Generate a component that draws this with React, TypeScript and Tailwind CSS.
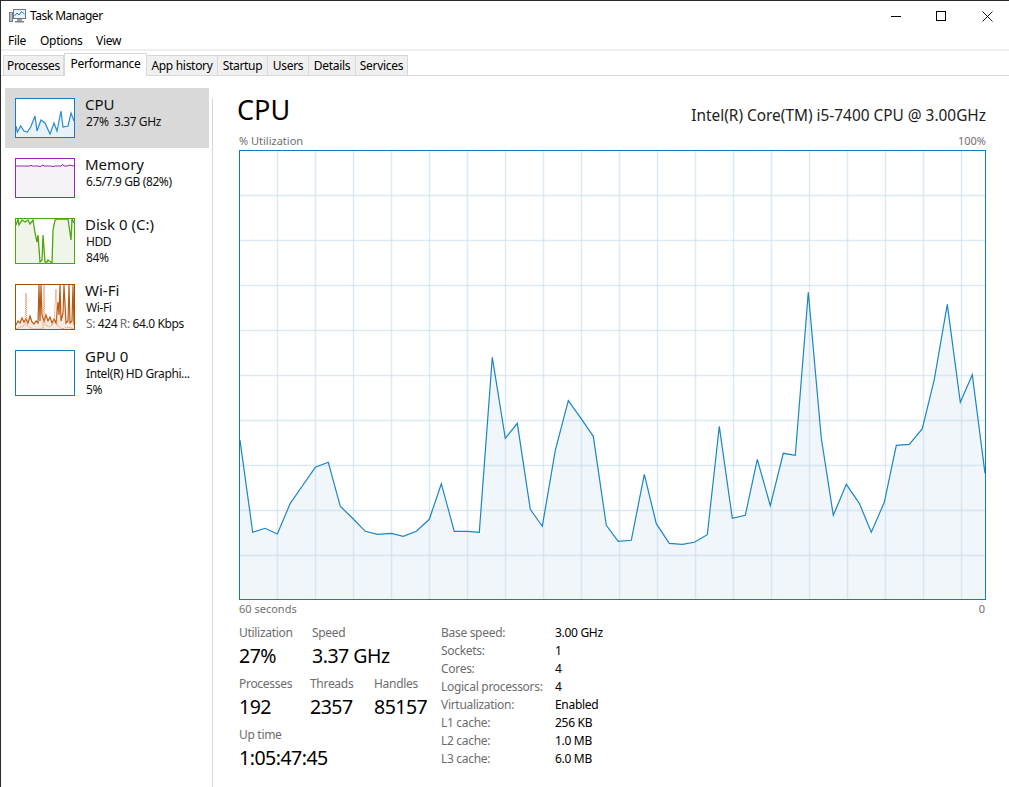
const TABS = [
  { name: 'Processes', width: 'w-[61px]' },
  { name: 'Performance', width: 'w-[83px]', active: true },
  { name: 'App history', width: 'w-[71px]' },
  { name: 'Startup', width: 'w-[50px]' },
  { name: 'Users', width: 'w-[41px]' },
  { name: 'Details', width: 'w-[47px]' },
  { name: 'Services', width: 'w-[52px]' },
]

const CPU_POINTS: [number, number][] = [
  [240, 440], [252.7, 532.3], [265, 528.3], [277.3, 534], [290.3, 503.3], [303, 485], [315.3, 467.3], [328.3, 462.3],
  [340.3, 506.3], [353.3, 519], [365.3, 531.3], [377.7, 534.3], [391.3, 533.3], [403.3, 536.3], [416.3, 531.3],
  [429.3, 519.3], [441.3, 483.7], [454.3, 531.3], [467.3, 531.3], [479.3, 532.3], [492.3, 357.3], [505.3, 438.3],
  [517.3, 423.3], [530.3, 509.3], [542.3, 526.3], [555.3, 450.3], [568.3, 400.7], [580.3, 417.3], [593.3, 436.3],
  [606.3, 525.3], [618.3, 541.3], [631.3, 540.3], [644.3, 474.3], [656.3, 523.7], [669.3, 543.3], [682.3, 544.3],
  [694.3, 542.3], [707.3, 534.7], [719.3, 426.3], [732.3, 518.3], [745.3, 515.3], [757.3, 459.3], [770.3, 505.7],
  [783.3, 453.3], [795.3, 455.3], [808.3, 292.3], [821.3, 438.3], [833.3, 515.3], [846.3, 484.3], [859.3, 503.3],
  [871.3, 532.3], [884.3, 502.3], [896.3, 445.3], [909.3, 444.3], [922.3, 428.7], [934.3, 379.3], [947.3, 304.3],
  [960.3, 402.3], [972.3, 374.7], [985, 473.3],
]

const VERTICALS = [277, 315, 353, 391, 429, 467, 505, 543, 581, 619, 657, 695, 733, 771, 809, 847, 885, 923, 961]
const HORIZONTALS = [195, 240, 285, 330, 375, 420, 465, 510, 555]

const STATS_RIGHT = [
  ['Base speed:', '3.00 GHz'],
  ['Sockets:', '1'],
  ['Cores:', '4'],
  ['Logical processors:', '4'],
  ['Virtualization:', 'Enabled'],
  ['L1 cache:', '256 KB'],
  ['L2 cache:', '1.0 MB'],
  ['L3 cache:', '6.0 MB'],
]

const toLine = (pts: [number, number][]) => pts.map((p) => p.join(',')).join(' ')

const AppIcon = () => (
  <svg width="17" height="16" viewBox="0 0 17 16" className="block">
    <rect x="0.5" y="4.5" width="3" height="9" fill="#b9bdc1" stroke="#7d8287" />
    <rect x="4.5" y="1.5" width="12" height="9" fill="#eaf3fa" stroke="#6e757c" />
    <path d="M5.5 8 L8 5 L10 7 L12.5 3.5 L15.5 6" fill="none" stroke="#2b7fbf" />
    <rect x="8" y="11" width="5" height="2" fill="#9aa0a6" />
    <rect x="6" y="13" width="9" height="1.5" fill="#7d8287" />
  </svg>
)

const WindowButtons = () => (
  <div className="ml-auto mr-[16px] flex items-center">
    <svg width="10" height="10" viewBox="0 0 10 10" className="block mr-[35px]">
      <line x1="0" x2="10" y1="5.5" y2="5.5" stroke="#000" />
    </svg>
    <svg width="10" height="10" viewBox="0 0 10 10" className="block mr-[36px]">
      <rect x="0.5" y="0.5" width="9" height="9" fill="none" stroke="#000" />
    </svg>
    <svg width="11" height="11" viewBox="0 0 11 11" className="block">
      <path d="M0.5 0.5 L10.5 10.5 M10.5 0.5 L0.5 10.5" stroke="#000" fill="none" strokeWidth="0.9" />
    </svg>
  </div>
)

const Thumb = ({ height, border, fill, children }: { height: string; border: string; fill?: string; children?: React.ReactNode }) => (
  <div className={`w-[60px] shrink-0 border ${height} ${border} ${fill ?? 'bg-white'}`}>
    {children}
  </div>
)

const CpuThumb = () => {
  const line: [number, number][] = [[0, 27], [1.3, 33], [4.7, 27], [8, 32], [11.3, 33], [14.7, 28], [19, 17], [21, 32], [25, 21], [29, 24], [34, 35], [38, 24], [41, 32], [45, 12], [47, 28], [52, 27], [55, 14], [58, 22]]
  return (
    <svg width="58" height="38" viewBox="0 0 58 38" className="block">
      <polygon points={`0,38 ${toLine(line)} 58,38`} fill="#e8f2f9" />
      <polyline points={toLine(line)} fill="none" stroke="#2a8cc7" strokeWidth="1.2" />
    </svg>
  )
}

const MemoryThumb = () => (
  <svg width="58" height="38" viewBox="0 0 58 38" className="block">
    <rect x="0" y="7" width="58" height="31" fill="#f4f2f4" />
    <polyline points="0,7 14,7 15,6 16,7 23,7 24,8 25,7 27,6 28,7 36,7 37,8 38,7 45,7 46,6 47,5.5 48,7 52,7 53,6 58,7" fill="none" stroke="#9528b4" />
  </svg>
)

const DiskThumb = () => {
  const line: [number, number][] = [[0, 6], [2, 0], [3, 6], [6, 1], [9, 3], [12, 1], [14, 5], [17, 1], [19, 14], [21, 23], [22, 16], [24, 43], [26, 41], [27, 16], [29, 43], [31, 43], [32, 41], [36, 44], [37, 11], [39, 1], [42, 0], [52, 0], [55, 21], [56, 0], [58, 4]]
  return (
    <svg width="58" height="44" viewBox="0 0 58 44" className="block">
      <polygon points={`0,44 ${toLine(line)} 58,44`} fill="#eff6e9" />
      <polyline points={toLine(line)} fill="none" stroke="#4da60c" strokeWidth="1.3" />
    </svg>
  )
}

const WifiThumb = () => {
  const solid = '0,40 2,36 4,38 6,33 8,37 10,34 12,38 14,31 16,37 18,39 20,36 22,38 23,0 24,36 25,0 26,30 28,36 30,30 32,36 34,32 36,38 38,34 40,38 42,17 43,30 44,0 45,36 47,28 48,0 50,38 52,36 53,0 54,38 56,36 57,0 58,40'
  const dotted = '0,44 5,42 9,40 10,8 11,40 16,44 27,44 28,0 29,40 34,42 38,38 40,4 41,40 46,44 52,42 58,44'
  return (
    <svg width="58" height="44" viewBox="0 0 58 44" className="block">
      <polygon points={`0,44 ${solid} 58,44`} fill="#f7ece3" />
      <polyline points={solid} fill="none" stroke="#b85c14" strokeWidth="1.2" />
      <polyline points={dotted} fill="none" stroke="#e0805a" strokeWidth="1" strokeDasharray="1 1" />
    </svg>
  )
}

const SideTitle = ({ children }: { children: React.ReactNode }) => (
  <div className="h-[16px] -mt-[2px] mb-[2px] text-[15px] leading-[16px] text-[#111] whitespace-nowrap">{children}</div>
)

const SideLine = ({ children }: { children: React.ReactNode }) => (
  <div className="h-[16px] pl-px text-[12px] leading-[16px] tracking-[-0.4px] text-[#111] whitespace-nowrap">{children}</div>
)

const Stat = ({ label, value, className }: { label: string; value: string; className: string }) => (
  <div className={`flex flex-col ${className}`}>
    <div className="h-[18px] text-[12px] leading-[18px] tracking-[-0.3px] text-[#6d6d6d]">{label}</div>
    <div className="h-[33px] text-[19.5px] leading-[28px] tracking-[-0.5px] text-black whitespace-nowrap">{value}</div>
  </div>
)

export default function App() {
  return (
    <div className="w-[1009px] h-[787px] overflow-hidden bg-white border-t border-l border-[#2b2b2b] flex flex-col font-['Noto_Sans','Open_Sans',sans-serif]">
      {/* title bar */}
      <div className="h-[30px] flex items-center shrink-0">
        <div className="ml-[8px] w-[21px]"><AppIcon /></div>
        <span className="text-[12px] tracking-[-0.5px] text-black">Task Manager</span>
        <WindowButtons />
      </div>

      {/* menu */}
      <div className="h-[20px] -mb-[2px] flex items-center shrink-0 text-[12px] tracking-[-0.3px] text-black pl-[7px]">
        <span className="w-[32px]">File</span>
        <span className="w-[56px]">Options</span>
        <span>View</span>
      </div>
      <div className="h-[2px] bg-[#f0f0f0] shrink-0" />

      {/* tabs */}
      <div className="h-[25px] shrink-0 flex items-end pl-[2px] border-b border-[#d9d9d9] text-[12px] tracking-[-0.3px] text-black">
        {TABS.map((t) =>
          t.active ? (
            <div key={t.name} className={`${t.width} h-[23px] -mb-px bg-white border border-b-0 border-[#d9d9d9] leading-[20px] text-center`}>
              {t.name}
            </div>
          ) : (
            <div key={t.name} className={`${t.width} h-[20px] bg-[#f0f0f0] border-t border-r border-[#d9d9d9] first:border-l leading-[20px] text-center`}>
              {t.name}
            </div>
          ),
        )}
      </div>

      <div className="flex flex-1 min-h-0">
        {/* sidebar */}
        <div className="w-[204px] shrink-0 ml-[4px] mr-[3px] pt-[12px] flex flex-col">
          <div className="h-[60px] bg-[#d9d9d9] pt-[10px] pl-[10px] flex gap-[10px]">
            <Thumb height="h-[40px]" border="border-[#117dbb]"><CpuThumb /></Thumb>
            <div>
              <SideTitle>CPU</SideTitle>
              <SideLine>27%&nbsp; 3.37 GHz</SideLine>
            </div>
          </div>
          <div className="h-[60px] pt-[10px] pl-[10px] flex gap-[10px]">
            <Thumb height="h-[40px]" border="border-[#9528b4]"><MemoryThumb /></Thumb>
            <div>
              <SideTitle>Memory</SideTitle>
              <SideLine>6.5/7.9 GB (82%)</SideLine>
            </div>
          </div>
          <div className="h-[66px] pt-[10px] pl-[10px] flex gap-[10px]">
            <Thumb height="h-[46px]" border="border-[#4da60c]"><DiskThumb /></Thumb>
            <div>
              <SideTitle>Disk 0 (C:)</SideTitle>
              <SideLine>HDD</SideLine>
              <SideLine>84%</SideLine>
            </div>
          </div>
          <div className="h-[66px] pt-[10px] pl-[10px] flex gap-[10px]">
            <Thumb height="h-[46px]" border="border-[#a74f01]"><WifiThumb /></Thumb>
            <div>
              <SideTitle>Wi-Fi</SideTitle>
              <SideLine>Wi-Fi</SideLine>
              <SideLine><span className="text-[#6d6d6d]">S:</span> 424 <span className="text-[#6d6d6d]">R:</span> 64.0 Kbps</SideLine>
            </div>
          </div>
          <div className="h-[66px] pt-[10px] pl-[10px] flex gap-[10px]">
            <Thumb height="h-[46px]" border="border-[#117dbb]" />
            <div>
              <SideTitle>GPU 0</SideTitle>
              <SideLine>Intel(R) HD Graphi...</SideLine>
              <SideLine>5%</SideLine>
            </div>
          </div>
        </div>

        <div className="w-px mt-[22px] bg-[#d9d9d9] shrink-0" />

        {/* main */}
        <div className="w-[747px] ml-[26px] shrink-0 flex flex-col">
          <div className="h-[57px] shrink-0 flex items-end justify-between pb-[5px] -ml-[2px]">
            <span className="text-[27px] leading-[36px] text-black">CPU</span>
            <span className="text-[15.4px] leading-[20px] text-[#222] mb-[2px]">Intel(R) Core(TM) i5-7400 CPU @ 3.00GHz</span>
          </div>
          <div className="h-[17px] shrink-0 flex items-center justify-between text-[11px] text-[#707070]">
            <span>% Utilization</span>
            <span>100%</span>
          </div>
          <div className="h-[450px] shrink-0 border border-[#117dbb]">
            <svg width="745" height="448" viewBox="240 151 745 448" className="block">
              <polygon points={`240,599 ${toLine(CPU_POINTS)} 985,599`} fill="#f1f6fa" />
              {VERTICALS.map((x) => (
                <line key={x} x1={x + 0.5} x2={x + 0.5} y1="151" y2="599" stroke="#c4dcec" strokeOpacity="0.6" strokeWidth="1.4" />
              ))}
              {HORIZONTALS.map((y) => (
                <line key={y} x1="240" x2="985" y1={y + 0.5} y2={y + 0.5} stroke="#c4dcec" strokeOpacity="0.6" strokeWidth="1.4" />
              ))}
              <polyline points={toLine(CPU_POINTS)} fill="none" stroke="#1c86c2" strokeWidth="1.2" />
            </svg>
          </div>
          <div className="h-[19px] shrink-0 flex items-center justify-between text-[11px] text-[#707070]">
            <span>60 seconds</span>
            <span className="pr-[1px]">0</span>
          </div>

          {/* stats */}
          <div className="flex pt-[5px]">
            <div className="w-[202px] shrink-0 flex flex-col">
              <div className="flex">
                <Stat label="Utilization" value="27%" className="w-[73px]" />
                <Stat label="Speed" value="3.37 GHz" className="w-[120px]" />
              </div>
              <div className="flex">
                <Stat label="Processes" value="192" className="w-[71px]" />
                <Stat label="Threads" value="2357" className="w-[64px]" />
                <Stat label="Handles" value="85157" className="w-[60px]" />
              </div>
              <Stat label="Up time" value="1:05:47:45" className="w-[120px]" />
            </div>
            <div className="flex flex-col">
              {STATS_RIGHT.map(([k, v]) => (
                <div key={k} className="h-[18px] flex text-[12px] leading-[18px] tracking-[-0.3px]">
                  <span className="w-[114px] text-[#6d6d6d]">{k}</span>
                  <span className="text-black">{v}</span>
                </div>
              ))}
            </div>
          </div>
        </div>
      </div>
    </div>
  )
}
